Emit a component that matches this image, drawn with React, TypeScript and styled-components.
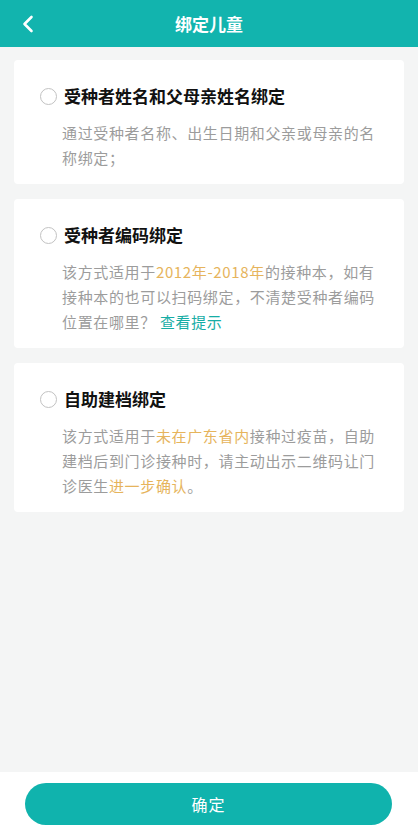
import styled, { createGlobalStyle } from 'styled-components';

const GlobalStyle = createGlobalStyle`
  html, body {
    margin: 0;
    padding: 0;
    background: #f4f5f5;
  }
  * {
    box-sizing: border-box;
  }
`;

const options = [
  {
    title: '受种者姓名和父母亲姓名绑定',
    desc: [{ text: '通过受种者名称、出生日期和父亲或母亲的名称绑定；' }],
  },
  {
    title: '受种者编码绑定',
    desc: [
      { text: '该方式适用于' },
      { text: '2012年-2018年', tone: 'gold' },
      { text: '的接种本，如有接种本的也可以扫码绑定，不清楚受种者编码位置在哪里？ ' },
      { text: '查看提示', tone: 'link' },
    ],
  },
  {
    title: '自助建档绑定',
    desc: [
      { text: '该方式适用于' },
      { text: '未在广东省内', tone: 'gold' },
      { text: '接种过疫苗，自助建档后到门诊接种时，请主动出示二维码让门诊医生' },
      { text: '进一步确认', tone: 'gold' },
      { text: '。' },
    ],
  },
];

export default function App() {
  return (
    <Page>
      <GlobalStyle />
      <Header>
        <BackButton aria-label="返回">
          <svg width="14" height="18" viewBox="0 0 14 18" fill="none">
            <path
              d="M10.5 2 L3.5 9 L10.5 16"
              stroke="#fff"
              strokeWidth="2.6"
              strokeLinecap="round"
              strokeLinejoin="round"
            />
          </svg>
        </BackButton>
        <HeaderTitle>绑定儿童</HeaderTitle>
      </Header>

      <Content>
        {options.map((opt, index) => (
          <Card key={index}>
            <TitleRow>
              <Radio />
              <Title>{opt.title}</Title>
            </TitleRow>
            <Desc>
              {opt.desc.map((part, i) => (
                <Part key={i} $tone={part.tone}>
                  {part.text}
                </Part>
              ))}
            </Desc>
          </Card>
        ))}
      </Content>

      <Footer>
        <ConfirmButton>确定</ConfirmButton>
      </Footer>
    </Page>
  );
}

const font = `"Noto Sans CJK SC", "Noto Sans", sans-serif`;

const Page = styled.div`
  display: flex;
  flex-direction: column;
  height: 100vh;
  font-family: ${font};
  background: #f4f5f5;
`;

const Header = styled.div`
  position: relative;
  display: flex;
  align-items: center;
  justify-content: center;
  height: 47px;
  flex-shrink: 0;
  background: #12b4ae;
`;

const BackButton = styled.div`
  position: absolute;
  left: 21px;
  top: 15px;
  display: flex;
`;

const HeaderTitle = styled.div`
  color: #fff;
  font-size: 17px;
  font-weight: 700;
  line-height: 24px;
`;

const Content = styled.div`
  flex: 1;
  display: flex;
  flex-direction: column;
  gap: 15px;
  padding: 13px 14px 0;
`;

const Card = styled.div`
  background: #fff;
  border-radius: 4px;
  padding: 24px 18px 14px 26px;
`;

const TitleRow = styled.div`
  display: flex;
  align-items: center;
  gap: 7px;
  height: 24px;
`;

const Radio = styled.span`
  width: 17px;
  height: 17px;
  border-radius: 50%;
  border: 1px solid #c2c2c2;
  background: #fff;
  flex-shrink: 0;
`;

const Title = styled.div`
  font-size: 17px;
  font-weight: 700;
  color: #111;
  line-height: 24px;
`;

const Desc = styled.p`
  margin: 12px 0 0;
  padding-left: 22px;
  font-size: 15px;
  letter-spacing: 0.65px;
  line-height: 25px;
  color: #9c9c9c;
`;

const Part = styled.span<{ $tone?: string }>`
  color: ${(p) =>
    p.$tone === 'gold' ? '#e6b45c' : p.$tone === 'link' ? '#16ada5' : 'inherit'};
`;

const Footer = styled.div`
  flex-shrink: 0;
  height: 58px;
  background: #fff;
  padding: 11px 26px 5px 25px;
`;

const ConfirmButton = styled.button`
  width: 100%;
  height: 42px;
  border: none;
  border-radius: 21px;
  background: #10b3ad;
  color: #fff;
  font-family: ${font};
  font-size: 16px;
  letter-spacing: 1px;
`;
